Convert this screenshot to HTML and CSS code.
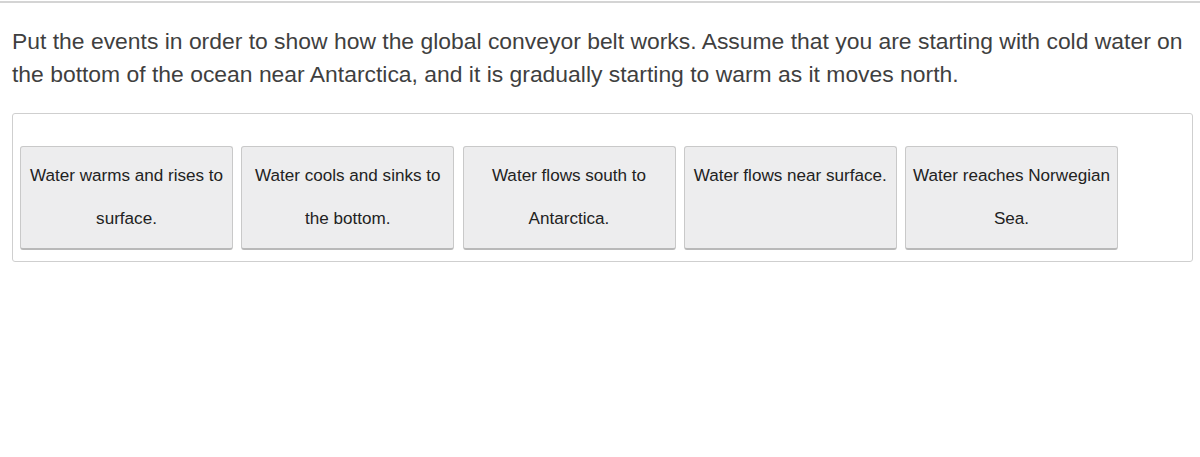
FILE: index.html
```html
<!DOCTYPE html>
<html>
<head>
<meta charset="utf-8">
<link rel="stylesheet" href="styles.css">
</head>
<body>
<div class="page">
  <p class="prompt">Put the events in order to show how the global conveyor belt works. Assume that you are starting with cold water on the bottom of the ocean near Antarctica, and it is gradually starting to warm as it moves north.</p>
  <div class="tray">
    <div class="card">Water warms and rises to surface.</div>
    <div class="card">Water cools and sinks to the bottom.</div>
    <div class="card">Water flows south to Antarctica.</div>
    <div class="card">Water flows near surface.</div>
    <div class="card">Water reaches Norwegian Sea.</div>
  </div>
</div>
</body>
</html>
```
FILE: styles.css
```css
html, body {
  margin: 0;
  padding: 0;
  background: #fff;
}
body {
  font-family: "Liberation Sans", Arial, sans-serif;
  color: #333;
}
.page {
  border-top: 2px solid #d4d4d4;
  margin-top: 1px;
  padding: 22px 7px 0 12px;
}
.prompt {
  margin: 0;
  font-size: 22.9px;
  line-height: 33px;
  color: #3f3f3f;
}
.tray {
  margin-top: 22px;
  border: 1px solid #cfcfcf;
  border-radius: 3px;
  padding: 32px 8px 11px 7px;
  display: flex;
  gap: 8.25px;
}
.card {
  width: 213px;
  box-sizing: border-box;
  padding: 7px 4px 8px;
  background: #ededee;
  border: 1px solid #c9c9c9;
  border-bottom: 2px solid #b9b9b9;
  border-radius: 3px;
  font-size: 17.1px;
  line-height: 43px;
  text-align: center;
  color: #222;
}
```
